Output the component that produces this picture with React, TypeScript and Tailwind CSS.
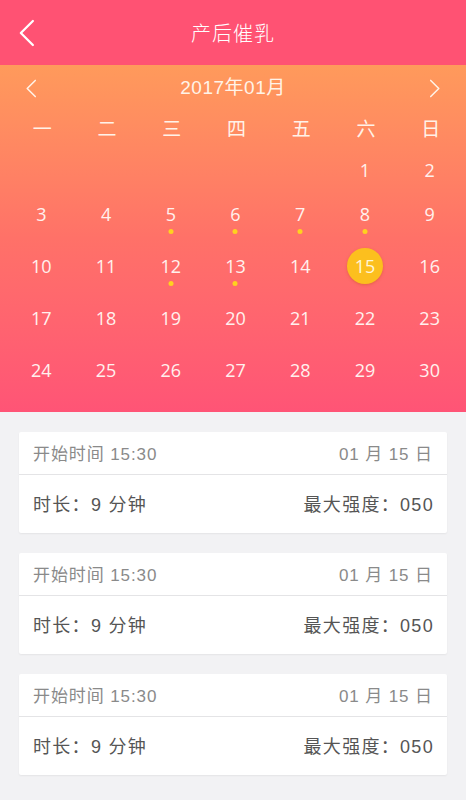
import React from 'react';

const WEEK = ['一', '二', '三', '四', '五', '六', '日'];
const DOTS = [5, 6, 7, 8, 12, 13];
const TODAY = 15;

const cells: (number | null)[] = [null, null, null, null, null, 1, 2];
for (let d = 3; d <= 30; d++) cells.push(d);

const rows: (number | null)[][] = [];
for (let i = 0; i < cells.length; i += 7) rows.push(cells.slice(i, i + 7));

const ROW_H = ['h-[36px]', 'h-[52px]', 'h-[52px]', 'h-[52px]', 'h-[53px]'];

const Chevron: React.FC<{ dir: 'left' | 'right'; className?: string }> = ({ dir, className }) => (
  <svg viewBox="0 0 12 20" className={className} fill="none" stroke="currentColor" strokeWidth={1.6} strokeLinecap="round" strokeLinejoin="round">
    {dir === 'left' ? <path d="M10.5 1.5 L2 10 L10.5 18.5" /> : <path d="M1.5 1.5 L10 10 L1.5 18.5" />}
  </svg>
);

const cardFont = { fontFamily: '"Liberation Sans", "Noto Sans CJK SC", sans-serif' };

const RecordCard: React.FC = () => (
  <div className="bg-white rounded-[2px] shadow-[0_1px_2px_rgba(0,0,0,0.06)]" style={cardFont}>
    <div className="h-[43px] flex items-center justify-between px-[14px] pt-[3px] text-[17px] tracking-[0.9px] text-[#8a8a8a] border-b border-[#e4e4e6]">
      <span>开始时间 15:30</span>
      <span>01 月 15 日</span>
    </div>
    <div className="h-[58px] flex items-center justify-between px-[14px] pt-[3px] text-[18px] tracking-[1.3px] text-[#555]">
      <span>时长：9 分钟</span>
      <span className="-mr-[1px]">最大强度：050</span>
    </div>
  </div>
);

export default function App() {
  return (
    <div
      className="w-[466px] h-[800px] bg-[#f2f2f4] overflow-hidden"
      style={{ fontFamily: '"Open Sans", "Noto Sans", "Noto Sans CJK SC", sans-serif' }}
    >
      {/* Nav bar */}
      <div className="h-[65px] bg-[#ff5273] relative flex items-center justify-center text-white">
        <Chevron dir="left" className="absolute left-[18px] top-[18px] w-[17px] h-[30px] text-white" />
        <span className="text-[20px] font-light tracking-[1px]" style={{ fontFamily: '"Noto Sans CJK SC", sans-serif' }}>产后催乳</span>
      </div>

      {/* Calendar */}
      <div className="bg-gradient-to-b from-[#ff9a5b] via-[#ff7168] to-[#ff5476] h-[347px] text-white">
        <div className="h-[46px] flex items-center justify-between px-[25px] pt-[1px]">
          <Chevron dir="left" className="w-[12px] h-[19px] text-[#fff3e8]" />
          <span className="text-[19px] text-[#fff3e8] tracking-[0.5px]" style={{ fontFamily: '"Liberation Sans", "Noto Sans CJK SC", sans-serif' }}>2017年01月</span>
          <Chevron dir="right" className="w-[12px] h-[19px] text-[#fff3e8]" />
        </div>
        <div className="grid grid-cols-7 pl-[10px] pr-[3px] h-[35px] items-center text-[19px] text-[#fff2e8]" style={{ fontFamily: '"Noto Sans CJK SC", sans-serif' }}>
          {WEEK.map((w) => (
            <div key={w} className="text-center">{w}</div>
          ))}
        </div>
        <div className="pl-[9px] pr-[4px] pt-[6px]">
          {rows.map((row, ri) => (
            <div key={ri} className={`grid grid-cols-7 ${ROW_H[ri]}`}>
              {row.map((d, ci) => (
                <div key={ci} className="relative flex items-center justify-center">
                  {d === TODAY ? (
                    <div className="w-[36px] h-[36px] rounded-full bg-[#fcbf1e] shadow-[0_1px_3px_rgba(180,80,0,0.35)] flex items-center justify-center text-[18px] text-[#fff6d8]">
                      {d}
                    </div>
                  ) : (
                    <span className="text-[18px] text-[#fff1ee]">{d ?? ''}</span>
                  )}
                  {d !== null && DOTS.includes(d) && (
                    <span className="absolute left-1/2 -translate-x-1/2 bottom-[6px] w-[5px] h-[5px] rounded-full bg-[#ffd21f]" />
                  )}
                </div>
              ))}
            </div>
          ))}
        </div>
      </div>

      {/* Records */}
      <div className="px-[19px] pt-[20px] flex flex-col gap-[20px] w-[466px]">
        <RecordCard />
        <RecordCard />
        <RecordCard />
      </div>
    </div>
  );
}
